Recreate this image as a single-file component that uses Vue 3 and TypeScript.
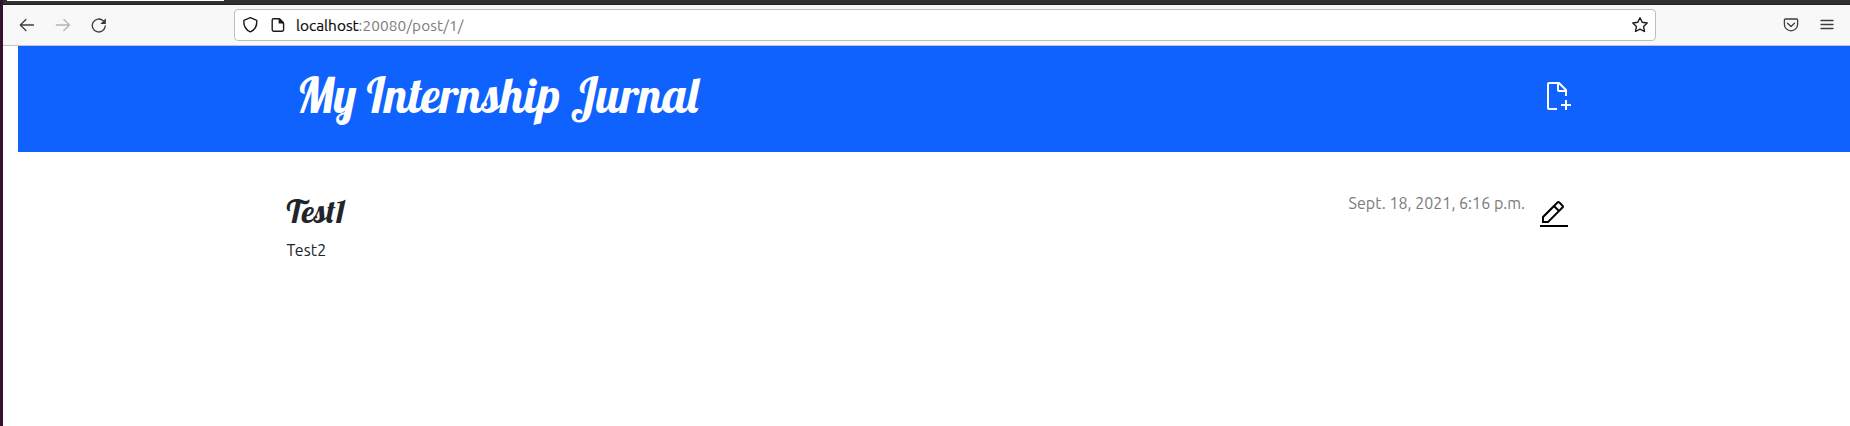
<script setup lang="ts">
const siteTitle: string = 'My Internship Jurnal'
const post = {
  title: 'Test1',
  text: 'Test2',
  date: 'Sept. 18, 2021, 6:16 p.m.',
}
</script>

<template>
  <div class="window">
    <div class="tabstrip"><div class="tab"></div></div>
    <nav class="toolbar">
      <div class="nav-buttons">
        <svg width="16" height="16" viewBox="0 0 16 16"><path d="M14.500 8H1.300M6.900 2.500 1.300 8l5.600 5.500" /></svg>
        <svg class="disabled" width="16" height="16" viewBox="0 0 16 16"><path d="M1.300 8H14.500M8.900 2.500 14.500 8l-5.600 5.500" /></svg>
        <svg width="16" height="16" viewBox="0 0 16 16">
          <path d="M14.300 8.800A6.500 6.500 0 1 1 12.200 3.700" />
          <path class="solid" d="M14.900 1.300v5.600H9.300z" />
        </svg>
      </div>
      <div class="urlbar">
        <svg width="16" height="18" viewBox="0 0 16 18"><path d="M7 1.700 13.400 4.300c.5 5.400-1.600 9.400-6.400 11.600C2.200 13.700.1 9.700.6 4.300z" transform="translate(.3 0)" /></svg>
        <svg class="page-icon" width="14" height="16" viewBox="0 0 14 16">
          <path d="M2.600 1.800H8l4.600 4.600v6.400q0 1.400-1.400 1.400H2.600q-1.400 0-1.400-1.400V3.200q0-1.400 1.400-1.400z" />
          <path class="solid" d="M7.600 1.200H9l4 4v1.400H7.600z" />
        </svg>
        <span class="url"><b>localhost</b>:20080/post/1/</span>
        <svg class="star" width="18" height="18" viewBox="0 0 18 18"><path d="m9 1.800 2.200 4.500 5 .7-3.600 3.500.9 5L9 13.200l-4.500 2.300.9-5L1.800 7l5-.7z" /></svg>
      </div>
      <div class="tools">
        <svg width="16" height="16" viewBox="0 0 16 16"><path d="M2.500 2h11Q14.600 2 14.600 3v4.200a6.600 6.600 0 0 1-13.200 0V3Q1.400 2 2.500 2zM4.500 6.200 8 9.500l3.500-3.300" /></svg>
        <svg width="14" height="14" viewBox="0 0 14 14"><path d="M1 2.500h12M1 6.500h12M1 10.500h12" /></svg>
      </div>
    </nav>
    <main class="page">
      <header class="page-header">
        <h1>{{ siteTitle }}</h1>
        <svg class="carbon" width="32" height="32" viewBox="0 0 32 32">
          <path d="M30 24h-4v-4h-2v4h-4v2h4v4h2v-4h4z" />
          <path d="M16 28H8V4h8v6a2 2 0 0 0 2 2h6v4h2v-6a.9.9 0 0 0-.3-.7l-7-7A.9.9 0 0 0 18 2H8a2 2 0 0 0-2 2v24a2 2 0 0 0 2 2h8zM18 4.400 23.600 10H18z" />
        </svg>
      </header>
      <article class="post">
        <div class="copy">
          <h2>{{ post.title }}</h2>
          <p>{{ post.text }}</p>
        </div>
        <time>{{ post.date }}</time>
        <svg class="carbon" width="32" height="32" viewBox="0 0 32 32">
          <path d="M2 26h28v2H2zM25.400 9c.8-.8.8-2 0-2.800l-3.600-3.600c-.8-.8-2-.8-2.800 0l-15 15V24h6.400zm-5-5L24 7.600l-3 3L17.400 7zM6 22v-3.600l10-10 3.600 3.600-10 10z" />
        </svg>
      </article>
    </main>
  </div>
</template>

<style>
body { margin: 0; }
</style>

<style scoped>
* { box-sizing: border-box; }
.window {
  height: 426px;
  border-left: 3px solid #34132b;
  background: #fff;
  overflow: hidden;
  font-family: Ubuntu, "Noto Sans", sans-serif;
}
svg { display: block; flex: none; }
.tabstrip { height: 5px; background: #333031; border-bottom: 1px solid #222; padding-left: 4px; }
.tab { width: 217px; height: 1px; background: #fff; }
.toolbar {
  height: 41px;
  display: flex;
  align-items: center;
  background: #f8f8f8;
  border-bottom: 1px solid #c3c3c3;
}
.toolbar path { fill: none; stroke: #3c3c3f; stroke-width: 1.3; stroke-linejoin: round; stroke-linecap: round; }
.toolbar .solid { fill: #3c3c3f; stroke: none; }
.toolbar .disabled path { stroke: #b3b3b3; }
.nav-buttons { display: flex; gap: 20px; width: 231px; padding-left: 16px; }
.urlbar {
  width: 1422px;
  height: 32px;
  display: flex;
  align-items: center;
  padding: 0 6px 0 8px;
  border: 1px solid #bebebe;
  border-radius: 4px;
  background: #fff;
}
.urlbar path { stroke: #1b1b1f; stroke-width: 1.4; }
.urlbar .solid { fill: #1b1b1f; }
.page-icon { margin-left: 12px; }
.url { margin-left: 11px; color: #7b7b7b; font-size: 15.400px; letter-spacing: .1px; white-space: nowrap; }
.url b { font-weight: 400; color: #0c0c0d; letter-spacing: 0; -webkit-text-stroke: .2px; }
.star { margin-left: auto; }
.tools { display: flex; align-items: center; gap: 21px; margin-left: 127px; }
.page { padding-left: 15px; }
.page-header {
  height: 106px;
  display: flex;
  justify-content: space-between;
  align-items: flex-start;
  padding: 24px 277px 0 279px;
  background: #0f62fe;
}
.page-header .carbon { margin-top: 10px; fill: #fff; }
h1, h2 { margin: 0; font-family: Lobster, "Liberation Serif", serif; font-weight: 400; white-space: nowrap; }
h1 { color: #fff; font-size: 48px; line-height: 50px; margin-left: -.6px; }
.post { display: flex; align-items: flex-start; padding: 39px 280px 0 268.500px; }
.copy { flex: 1; color: #212529; }
h2 { font-size: 32px; line-height: 38px; padding-top: 1px; }
.copy p { margin: 8px 0 0; font-size: 16px; line-height: 24px; letter-spacing: .15px; }
time { color: #7b7b7b; font-size: 16px; line-height: 24px; letter-spacing: .03px; margin-right: 13px; white-space: nowrap; }
.post .carbon { margin-top: 8px; fill: #000; }
</style>
